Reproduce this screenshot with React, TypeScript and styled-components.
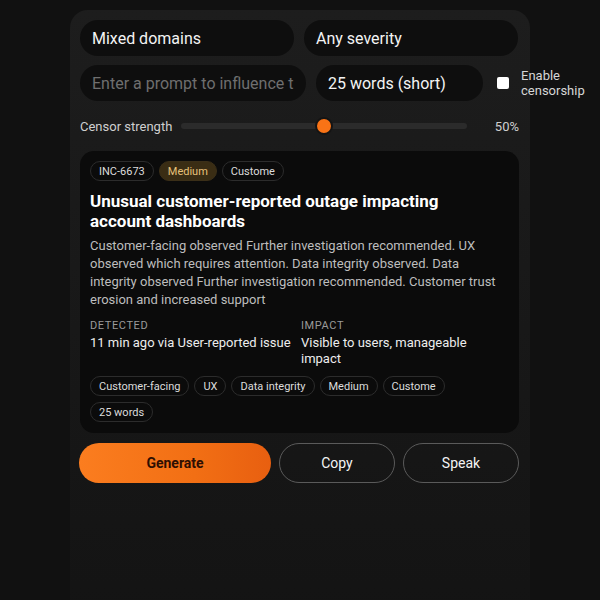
import React from "react";
import styled, { createGlobalStyle } from "styled-components";

const Global = createGlobalStyle`
  html, body { margin: 0; padding: 0; background: #111111; }
  body { font-family: Roboto, "Liberation Sans", sans-serif; color: #f2f2f2; overflow: hidden; }
  * { box-sizing: border-box; }
`;

const Page = styled.div`
  width: 600px;
  height: 600px;
  padding: 10px 70px 0;
  background: #111111;
  overflow: hidden;
`;

const Panel = styled.div`
  width: 460px;
  min-height: 640px;
  border-radius: 18px;
  background: linear-gradient(180deg, #1d1d1d 0%, #181818 50%, #131313 100%);
  padding: 10px 11px 10px 10px;
  display: flex;
  flex-direction: column;
  gap: 9px;
`;

const Row = styled.div<{ $cols: string }>`
  display: grid;
  grid-template-columns: ${(p) => p.$cols};
  gap: 10px;
  align-items: center;
`;

const Field = styled.div<{ $placeholder?: boolean }>`
  height: 36px;
  border-radius: 18px;
  background: #0e0e0e;
  padding: 0 12px;
  display: flex;
  align-items: center;
  font-size: 16px;
  color: ${(p) => (p.$placeholder ? "#6f6f6f" : "#f4f4f4")};
  white-space: nowrap;
  overflow: hidden;
`;

const CheckWrap = styled.label`
  display: flex;
  align-items: center;
  gap: 12px;
  padding-left: 4px;
  width: 110px;
  font-size: 13px;
  line-height: 15px;
  color: #d6d6d6;
`;

const Box = styled.span`
  width: 12px;
  height: 12px;
  background: #ffffff;
  border-radius: 2px;
  flex: none;
`;

const SliderRow = styled.div`
  display: flex;
  align-items: center;
  height: 32px;
  font-size: 13px;
  color: #cfcfcf;
`;

const SliderLabel = styled.span`
  width: 101px;
`;

const Track = styled.div`
  position: relative;
  width: 286px;
  height: 6px;
  border-radius: 3px;
  background: #2b2b2b;
`;

const Thumb = styled.span`
  position: absolute;
  top: 50%;
  width: 18px;
  height: 18px;
  border-radius: 50%;
  background: #f97316;
  border: 2px solid #141414;
  transform: translate(-50%, -50%);
`;

const Pct = styled.span`
  flex: 1;
  text-align: right;
`;

const Card = styled.div`
  background: #0b0b0b;
  border-radius: 14px;
  padding: 10px 10px 11px;
  display: flex;
  flex-direction: column;
`;

const Tags = styled.div`
  display: flex;
  flex-wrap: wrap;
  gap: 6px 5px;
`;

const Tag = styled.span<{ $tone?: "warn" }>`
  height: 20px;
  padding: 0 8px;
  border-radius: 10px;
  display: inline-flex;
  align-items: center;
  font-size: 11px;
  border: 1px solid ${(p) => (p.$tone === "warn" ? "#3b2f18" : "#2c2c2c")};
  background: ${(p) => (p.$tone === "warn" ? "#3a2d14" : "transparent")};
  color: ${(p) => (p.$tone === "warn" ? "#e8c27a" : "#dcdcdc")};
`;

const Title = styled.h2`
  margin: 10px 0 6px;
  max-width: 400px;
  font-size: 17px;
  line-height: 20px;
  font-weight: 700;
  color: #ffffff;
`;

const Desc = styled.p`
  margin: 0;
  font-size: 13px;
  line-height: 18px;
  color: #bdbdbd;
`;

const Meta = styled.div`
  display: grid;
  grid-template-columns: 211px 1fr;
  margin: 10px 0 9px;
`;

const MetaLabel = styled.div`
  font-size: 11px;
  letter-spacing: 0.6px;
  color: #9a9a9a;
  text-transform: uppercase;
  line-height: 14px;
`;

const MetaValue = styled.div`
  font-size: 13px;
  line-height: 16px;
  color: #ededed;
  margin-top: 2px;
`;

const Actions = styled.div`
  display: flex;
  gap: 8px;
  margin-top: 1px;
  margin-left: -1px;
  margin-right: -1px;
`;

const Btn = styled.button<{ $primary?: boolean; $w: number }>`
  width: ${(p) => p.$w}px;
  height: 40px;
  border-radius: 20px;
  font-family: Roboto, "Liberation Sans", sans-serif;
  font-size: 14px;
  font-weight: ${(p) => (p.$primary ? 700 : 400)};
  color: ${(p) => (p.$primary ? "#2e0f03" : "#f4f4f4")};
  background: ${(p) =>
    p.$primary ? "linear-gradient(90deg, #fb7d1f 0%, #f26f14 60%, #e85f10 100%)" : "transparent"};
  border: ${(p) => (p.$primary ? "none" : "1px solid #5a5a5a")};
  cursor: pointer;
`;

export default function App() {
  return (
    <>
      <Global />
      <Page>
        <Panel>
          <Row $cols="214px 214px">
            <Field>Mixed domains</Field>
            <Field>Any severity</Field>
          </Row>
          <Row $cols="226px 167px auto">
            <Field $placeholder>Enter a prompt to influence t</Field>
            <Field>25 words (short)</Field>
            <CheckWrap>
              <Box />
              <span>
                Enable
                <br />
                censorship
              </span>
            </CheckWrap>
          </Row>
          <SliderRow>
            <SliderLabel>Censor strength</SliderLabel>
            <Track>
              <Thumb style={{ left: "50%" }} />
            </Track>
            <Pct>50%</Pct>
          </SliderRow>
          <Card>
            <Tags>
              <Tag>INC-6673</Tag>
              <Tag $tone="warn">Medium</Tag>
              <Tag>Custome</Tag>
            </Tags>
            <Title>Unusual customer-reported outage impacting account dashboards</Title>
            <Desc>
              Customer-facing observed Further investigation recommended. UX observed which requires
              attention. Data integrity observed. Data integrity observed Further investigation
              recommended. Customer trust erosion and increased support
            </Desc>
            <Meta>
              <div>
                <MetaLabel>Detected</MetaLabel>
                <MetaValue>11 min ago via User-reported issue</MetaValue>
              </div>
              <div>
                <MetaLabel>Impact</MetaLabel>
                <MetaValue>Visible to users, manageable impact</MetaValue>
              </div>
            </Meta>
            <Tags>
              <Tag>Customer-facing</Tag>
              <Tag>UX</Tag>
              <Tag>Data integrity</Tag>
              <Tag>Medium</Tag>
              <Tag>Custome</Tag>
              <Tag>25 words</Tag>
            </Tags>
          </Card>
          <Actions>
            <Btn $primary $w={192}>Generate</Btn>
            <Btn $w={116}>Copy</Btn>
            <Btn $w={116}>Speak</Btn>
          </Actions>
        </Panel>
      </Page>
    </>
  );
}
